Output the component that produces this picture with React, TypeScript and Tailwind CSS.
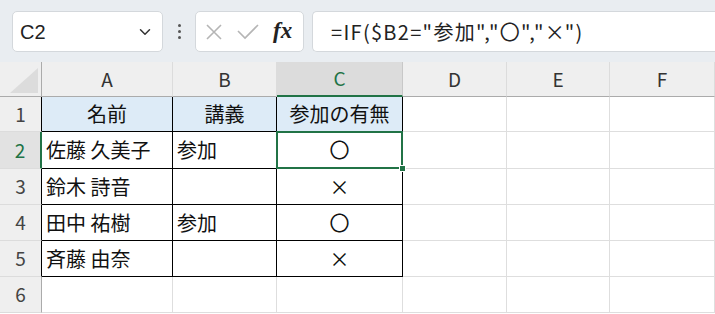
import { ChevronDown } from "lucide-react";

const font = { fontFamily: '"Noto Sans CJK JP", "Noto Sans", sans-serif' };

type CellProps = {
  text?: string;
  align?: "left" | "center";
  header?: boolean;
  table?: boolean;
  selected?: boolean;
};

const cols = ["A", "B", "C", "D", "E", "F"];

const data: string[][] = [
  ["名前", "講義", "参加の有無"],
  ["佐藤 久美子", "参加", "〇"],
  ["鈴木 詩音", "", "×"],
  ["田中 祐樹", "参加", "〇"],
  ["斉藤 由奈", "", "×"],
];

function Cell({ text = "", align = "left", header, table, selected }: CellProps) {
  return (
    <div
      className={`relative flex items-center overflow-visible whitespace-nowrap border-r border-b px-[4px] text-[20px] text-[#111] ${
        table ? "border-black" : "border-[#dedede]"
      } ${header ? "bg-[#ddebf7]" : "bg-white"} ${align === "center" ? "justify-center" : "justify-start"}`}
    >
      {text}
      {selected && (
        <>
          <div className="pointer-events-none absolute -left-px -top-px -right-px -bottom-px border-2 border-[#217346]" />
          <div className="absolute -right-[4px] -bottom-[4px] z-10 h-[7px] w-[7px] border border-white bg-[#217346]" />
        </>
      )}
    </div>
  );
}

export default function App() {
  return (
    <div className="h-[314px] w-[715px] overflow-hidden bg-white" style={font}>
      {/* formula bar */}
      <div className="flex h-[62px] items-center gap-[8px] bg-[#e9edf1] pl-[12px] pr-0 pt-[1px]">
        <div className="flex h-[41px] w-[151px] items-center justify-between rounded-[5px] border border-[#d4d8dc] bg-white pl-[7px] pr-[8px]">
          <span className="text-[20px] text-[#222]" style={{ fontFamily: '"Liberation Sans", sans-serif' }}>
            C2
          </span>
          <ChevronDown className="h-[18px] w-[18px] text-[#333]" strokeWidth={2} />
        </div>
        <div className="flex w-[16px] flex-col items-center gap-[3px]">
          <span className="h-[3px] w-[3px] rounded-full bg-[#555]" />
          <span className="h-[3px] w-[3px] rounded-full bg-[#555]" />
          <span className="h-[3px] w-[3px] rounded-full bg-[#555]" />
        </div>
        <div className="flex h-[41px] w-[109px] items-center gap-[14px] rounded-[5px] border border-[#d4d8dc] bg-white pl-[9px]">
          <svg width="18" height="18" viewBox="0 0 18 18" fill="none" stroke="#b5b5b5" strokeWidth="1.6">
            <path d="M2 2 L16 16 M16 2 L2 16" />
          </svg>
          <svg width="22" height="16" viewBox="0 0 22 16" fill="none" stroke="#b5b5b5" strokeWidth="1.6">
            <path d="M1 7 L8 14 L21 1" />
          </svg>
          <span
            className="text-[23px] font-bold italic text-[#222]"
            style={{ fontFamily: '"Liberation Serif", serif' }}
          >
            fx
          </span>
        </div>
        <div className="flex h-[41px] flex-1 items-center rounded-l-[5px] border border-r-0 border-[#d4d8dc] bg-white pl-[18px]">
          <span className="text-[20px] tracking-[1.3px] text-[#222]">
            =IF($B2="参加","〇","<span className="inline-block w-[1em] text-center">×</span>")
          </span>
        </div>
      </div>

      {/* sheet */}
      <div className="grid grid-cols-[42px_131px_104px_126px_104px_103px_1fr] grid-rows-[35px_35px_37px_36px_36px_36px_36px]">
        {/* column headers */}
        <div className="relative border-r border-b border-[#ababab] bg-[#efefef]">
          <div
            className="absolute right-[3px] bottom-[3px] h-[25px] w-[28px] bg-[#dcdcdc]"
            style={{ clipPath: "polygon(100% 0, 100% 100%, 0 100%)" }}
          />
        </div>
        {cols.map((c) => (
          <div
            key={c}
            className={`flex items-center justify-center text-[19px] ${
              c === "C"
                ? "border-r border-b-2 border-r-[#c8c8c8] border-b-[#217346] bg-[#dcdcdc] text-[#217346]"
                : "border-r border-b border-r-[#dcdcdc] border-b-[#ababab] bg-[#efefef] text-[#333]"
            }`}
          >
            {c}
          </div>
        ))}

        {/* rows */}
        {[1, 2, 3, 4, 5, 6].map((r) => {
          const row = data[r - 1];
          return [
            <div
              key={`h${r}`}
              className={`flex items-center justify-center border-b text-[19px] ${
                r === 2
                  ? "border-r-2 border-r-[#217346] border-b-[#dcdcdc] bg-[#e2e2e2] text-[#217346]"
                  : `border-r border-b-[#dcdcdc] bg-[#efefef] text-[#444] ${r <= 5 ? "border-r-black" : "border-r-[#ababab]"}`
              }`}
            >
              {r}
            </div>,
            ...cols.map((c, i) => {
              const inTable = row !== undefined && i < 3;
              const text = inTable ? row[i] : "";
              return (
                <Cell
                  key={`${c}${r}`}
                  text={text}
                  table={inTable}
                  header={r === 1 && i < 3}
                  align={r === 1 || i === 2 ? "center" : "left"}
                  selected={r === 2 && c === "C"}
                />
              );
            }),
          ];
        })}
      </div>
    </div>
  );
}
